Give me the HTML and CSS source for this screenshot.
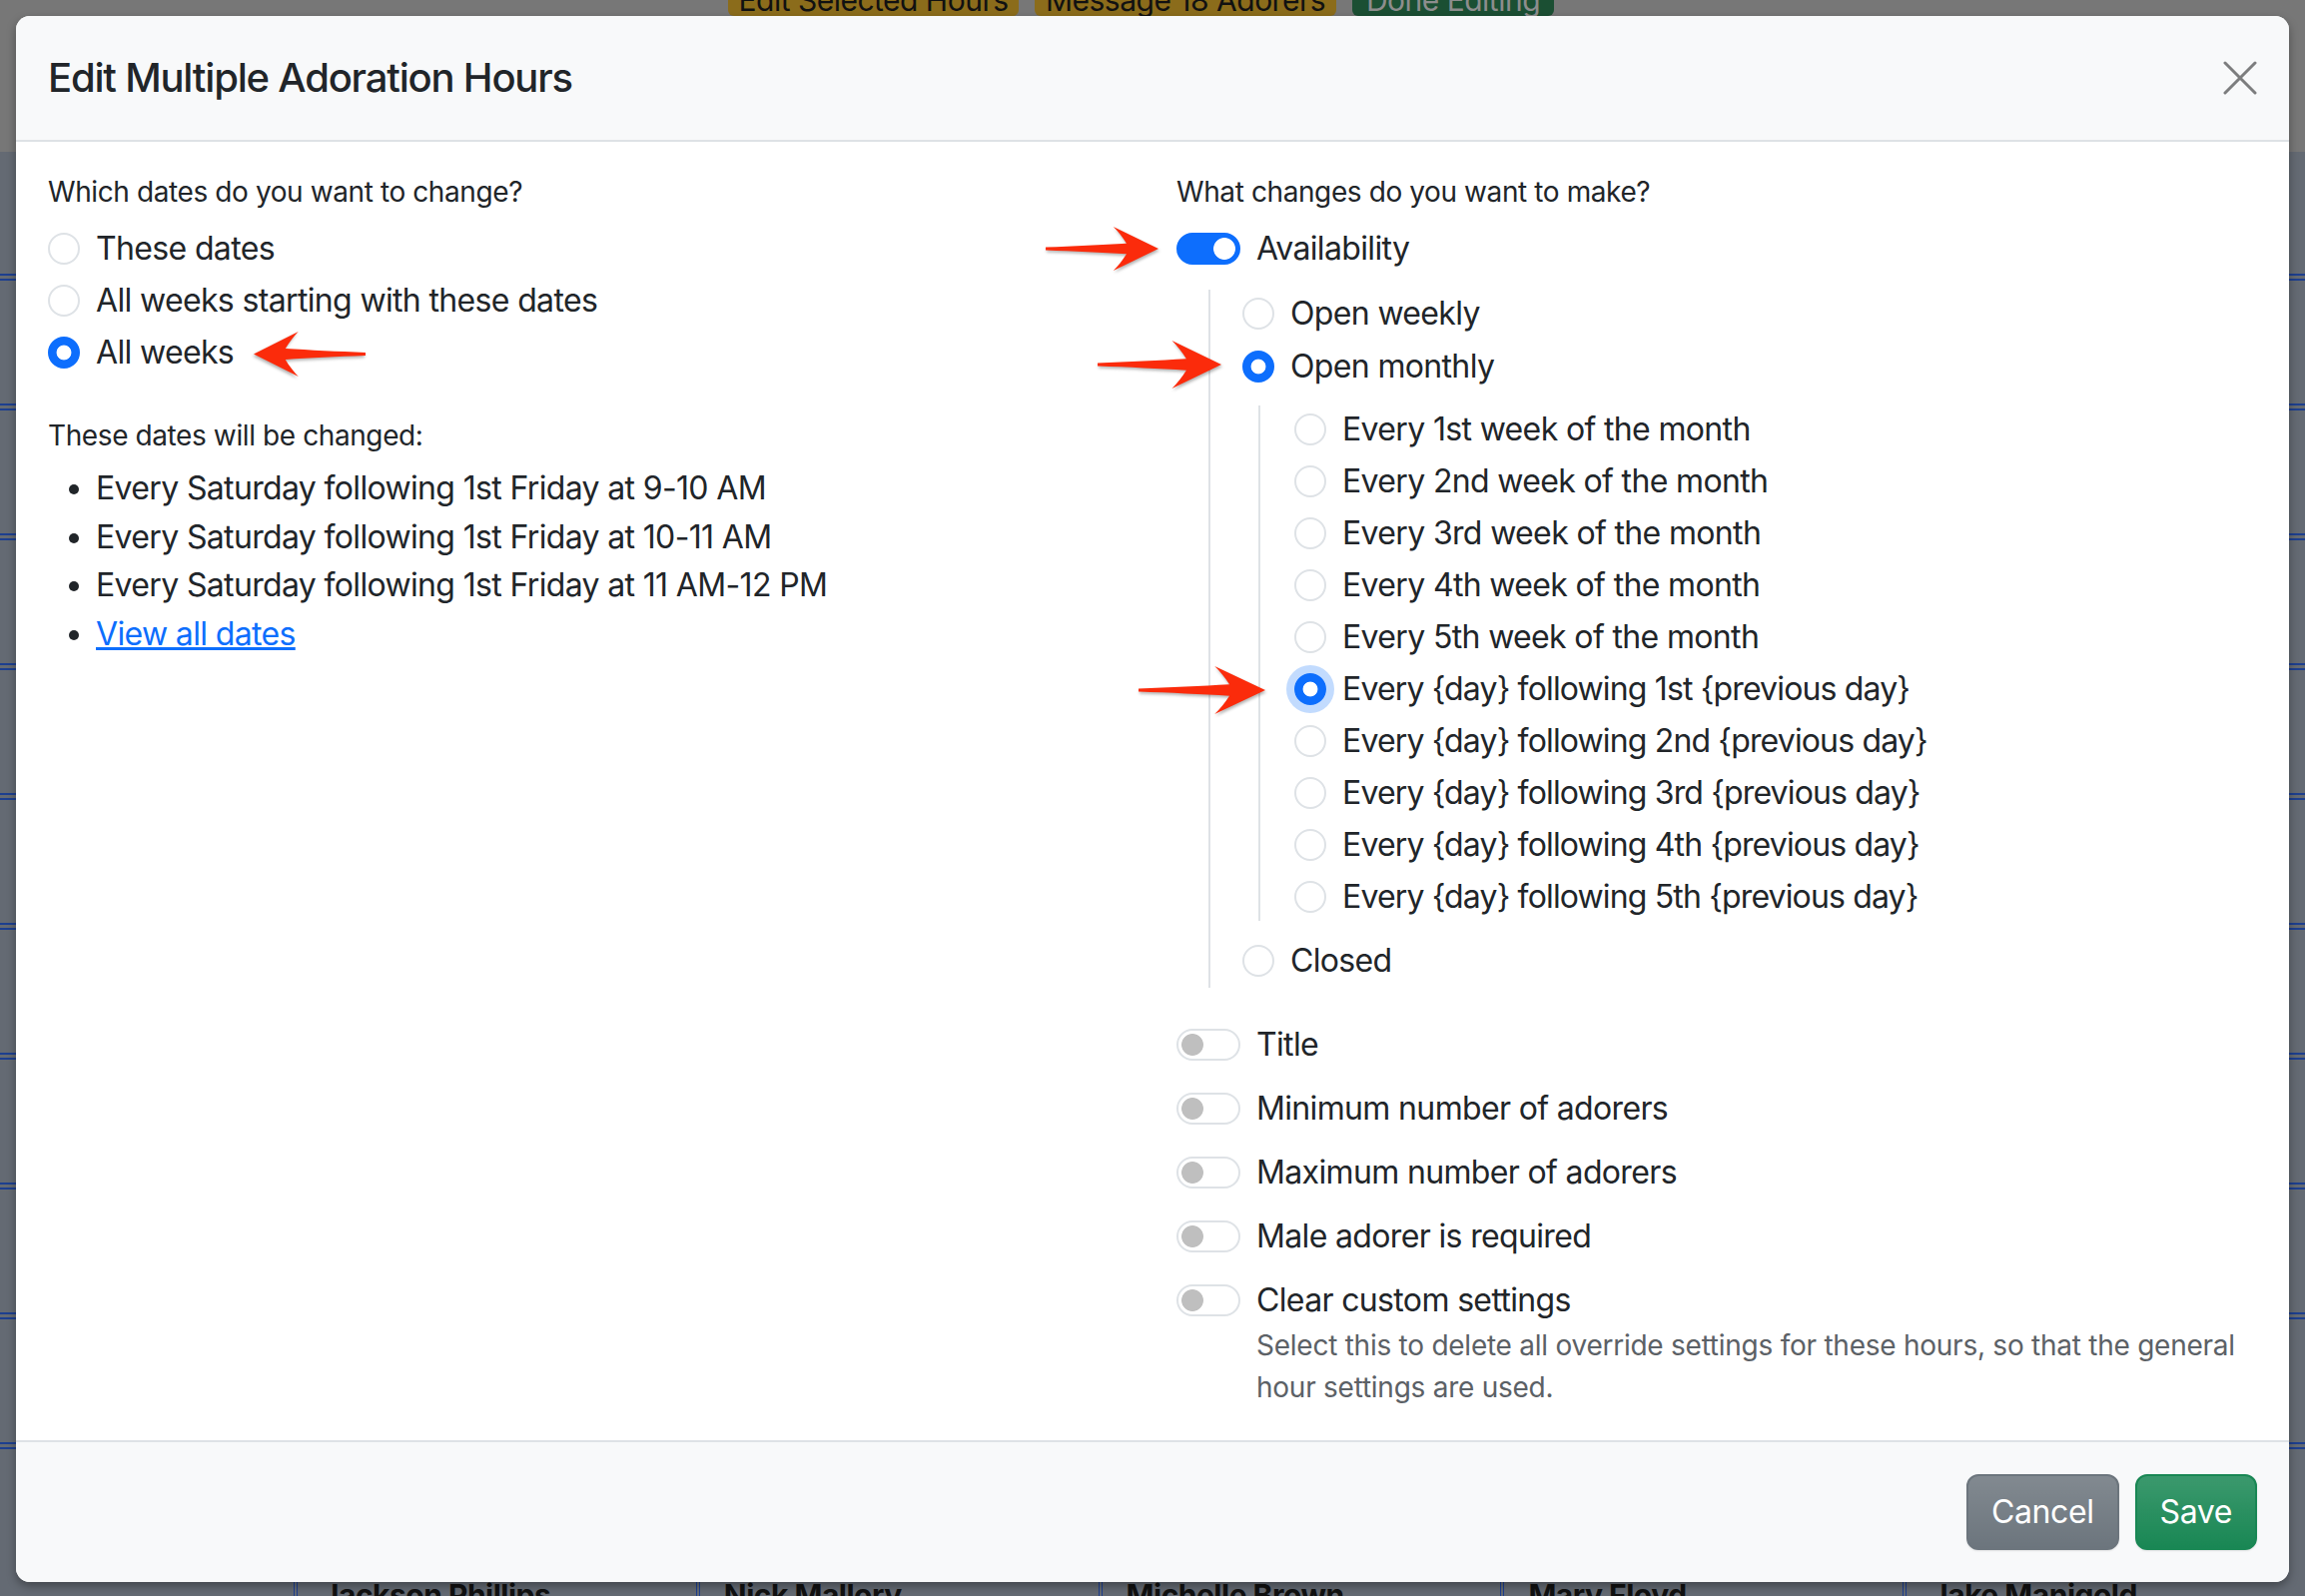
FILE: index.html
```html
<!DOCTYPE html>
<html lang="en">
<head>
<meta charset="utf-8">
<title>Edit Multiple Adoration Hours</title>
<link rel="stylesheet" href="styles.css">
</head>
<body>
<div class="page">
  <div class="page-top">
    <span class="pbtn pbtn-warn pbtn-1">Edit Selected Hours</span>
    <span class="pbtn pbtn-warn pbtn-2">Message 18 Adorers</span>
    <span class="pbtn pbtn-ok pbtn-3">Done Editing</span>
  </div>
  <div class="page-rows"></div>
  <div class="page-names">
    <span class="pname">Jackson Phillips</span>
    <span class="pname">Nick Mallory</span>
    <span class="pname">Michelle Brown</span>
    <span class="pname">Mary Floyd</span>
    <span class="pname">Jake Manigold</span>
  </div>
</div>

<div class="modal">
  <div class="modal-header">
    <h5 class="modal-title">Edit Multiple Adoration Hours</h5>
    <button class="btn-close" aria-label="Close">
      <svg viewBox="0 0 34 34" width="34" height="34"><path d="M2 2 L32 32 M32 2 L2 32" stroke="#7c7d7e" stroke-width="3" stroke-linecap="round" fill="none"/></svg>
    </button>
  </div>

  <div class="modal-body">
    <div class="col">
      <div class="q">Which dates do you want to change?</div>
      <div class="opts">
        <label class="check"><input type="radio" name="dates"><span>These dates</span></label>
        <label class="check"><input type="radio" name="dates"><span>All weeks starting with these dates</span></label>
        <label class="check"><input type="radio" name="dates" checked><span>All weeks</span></label>
      </div>
      <div class="q">These dates will be changed:</div>
      <ul class="dates">
        <li>Every Saturday following 1st Friday at 9-10 AM</li>
        <li>Every Saturday following 1st Friday at 10-11 AM</li>
        <li>Every Saturday following 1st Friday at 11 AM-12 PM</li>
        <li><a href="#">View all dates</a></li>
      </ul>
    </div>

    <div class="col">
      <div class="q">What changes do you want to make?</div>
      <label class="check"><input type="checkbox" class="switch" checked><span>Availability</span></label>
      <div class="sub">
        <label class="check"><input type="radio" name="avail"><span>Open weekly</span></label>
        <label class="check"><input type="radio" name="avail" checked><span>Open monthly</span></label>
        <div class="sub sub-inner">
          <label class="check"><input type="radio" name="month"><span>Every 1st week of the month</span></label>
          <label class="check"><input type="radio" name="month"><span>Every 2nd week of the month</span></label>
          <label class="check"><input type="radio" name="month"><span>Every 3rd week of the month</span></label>
          <label class="check"><input type="radio" name="month"><span>Every 4th week of the month</span></label>
          <label class="check"><input type="radio" name="month"><span>Every 5th week of the month</span></label>
          <label class="check brace"><input type="radio" name="month" class="focus" checked><span>Every {day} following 1st {previous day}</span></label>
          <label class="check brace"><input type="radio" name="month"><span>Every {day} following 2nd {previous day}</span></label>
          <label class="check brace"><input type="radio" name="month"><span>Every {day} following 3rd {previous day}</span></label>
          <label class="check brace"><input type="radio" name="month"><span>Every {day} following 4th {previous day}</span></label>
          <label class="check brace"><input type="radio" name="month"><span>Every {day} following 5th {previous day}</span></label>
        </div>
        <label class="check"><input type="radio" name="avail"><span>Closed</span></label>
      </div>

      <div class="toggles">
        <label class="check"><input type="checkbox" class="switch"><span>Title</span></label>
        <label class="check"><input type="checkbox" class="switch"><span>Minimum number of adorers</span></label>
        <label class="check"><input type="checkbox" class="switch"><span>Maximum number of adorers</span></label>
        <label class="check"><input type="checkbox" class="switch"><span>Male adorer is required</span></label>
        <label class="check"><input type="checkbox" class="switch"><span>Clear custom settings</span></label>
        <div class="help">Select this to delete all override settings for these hours, so that the general hour settings are used.</div>
      </div>
    </div>
  </div>

  <div class="modal-footer">
    <button class="btn btn-secondary">Cancel</button>
    <button class="btn btn-success">Save</button>
  </div>

  <svg class="arrow arrow-1 arrow-left" viewBox="0 0 120 46" preserveAspectRatio="none"><path d="M0,21.5 C30,20.5 60,19 86,17.5 C82,11 77,5 72,0 L120,23 L72,46 C77,41 82,35 86,28.5 C60,27 30,25.5 0,24.5 Z"/></svg>
  <svg class="arrow arrow-2" viewBox="0 0 120 46" preserveAspectRatio="none"><path d="M0,21.5 C30,20.5 60,19 86,17.5 C82,11 77,5 72,0 L120,23 L72,46 C77,41 82,35 86,28.5 C60,27 30,25.5 0,24.5 Z"/></svg>
  <svg class="arrow arrow-3" viewBox="0 0 120 46" preserveAspectRatio="none"><path d="M0,21.5 C30,20.5 60,19 86,17.5 C82,11 77,5 72,0 L120,23 L72,46 C77,41 82,35 86,28.5 C60,27 30,25.5 0,24.5 Z"/></svg>
  <svg class="arrow arrow-4" viewBox="0 0 120 46" preserveAspectRatio="none"><path d="M0,21.5 C30,20.5 60,19 86,17.5 C82,11 77,5 72,0 L120,23 L72,46 C77,41 82,35 86,28.5 C60,27 30,25.5 0,24.5 Z"/></svg>
</div>
</body>
</html>
```

FILE: styles.css
```css
* { box-sizing: border-box; }

body {
  margin: 0;
  width: 2308px;
  height: 1598px;
  overflow: hidden;
  position: relative;
  font-family: Inter, "Noto Sans", "Liberation Sans", sans-serif;
  color: #212529;
  background: #646a73;
}

/* dimmed page behind the modal */
.page {
  height: 1598px;
  display: flex;
  flex-direction: column;
}
.page-top {
  height: 152px;
  flex: none;
  background: #777777;
  display: flex;
  gap: 16px;
  padding-left: 729px;
}
.pbtn {
  height: 34px;
  margin-top: -18px;
  font-size: 30px;
  line-height: 36px;
  letter-spacing: -0.5px;
  text-align: center;
  border-radius: 6px;
  color: #111;
}
.pbtn-warn { background: #8b6c1b; }
.pbtn-ok { background: #1b4f33; color: #8d8d8d; }
.pbtn-1 { width: 291px; }
.pbtn-2 { width: 302px; }
.pbtn-3 { width: 202px; }

.page-rows {
  flex: 1;
  background:
    repeating-linear-gradient(to bottom,
      transparent 0 122px,
      #1d3f8f 122px 124px,
      transparent 124px 127px,
      #1d3f8f 127px 129px,
      transparent 129px 130px),
    #646a73;
}
.page-names {
  height: 24px;
  flex: none;
  display: flex;
  padding-left: 294px;
  background: #646a73;
}
.pname {
  width: 423px;
  border-left: 4px double #1d3f8f;
  padding-left: 24px;
  padding-top: 6px;
  font-size: 30px;
  font-weight: 700;
  line-height: 34px;
  letter-spacing: -0.5px;
  color: #111;
}

/* modal */
.modal {
  position: absolute;
  left: 16px;
  top: 16px;
  width: 2276px;
  background: #fff;
  border-radius: 14px;
  box-shadow: 0 4px 10px rgba(0, 0, 0, 0.35);
}
.modal-header {
  display: flex;
  align-items: center;
  justify-content: space-between;
  padding: 32px;
  background: #f8f9fa;
  border-bottom: 2px solid #dee2e6;
  border-radius: 14px 14px 0 0;
}
.modal-title {
  margin: 0;
  font-size: 40px;
  font-weight: 500;
  line-height: 60px;
  letter-spacing: -1.2px;
}
.btn-close {
  width: 34px;
  height: 34px;
  padding: 0;
  border: 0;
  background: none;
  display: block;
}
.btn-close svg { display: block; }

.modal-body {
  display: grid;
  grid-template-columns: 1082px 1082px;
  column-gap: 48px;
  padding: 29px 32px 32px;
}

.q {
  font-size: 28px;
  line-height: 42px;
  letter-spacing: -0.4px;
  margin-bottom: 12px;
}

.check {
  display: flex;
  align-items: center;
  gap: 16px;
  min-height: 48px;
  margin-bottom: 4px;
  font-size: 32px;
  line-height: 48px;
  letter-spacing: -0.65px;
}
.check.brace { letter-spacing: -0.85px; }
.check input {
  appearance: none;
  -webkit-appearance: none;
  margin: 0;
  width: 32px;
  height: 32px;
  flex: none;
  border: 2px solid #dee2e6;
  border-radius: 50%;
  background: #fff;
}
.check input[type="radio"]:checked {
  border-color: #0d6efd;
  background: radial-gradient(circle, #fff 0 7px, #0d6efd 7.8px);
}
.check input.focus {
  box-shadow: 0 0 0 8px rgba(13, 110, 253, 0.25);
}
.check input.switch {
  width: 64px;
  border-radius: 16px;
  background: radial-gradient(circle at 14px 50%, #bfbfbf 0 10.5px, transparent 11.3px) #fff;
}
.check input.switch:checked {
  border-color: #0d6efd;
  background: radial-gradient(circle at calc(100% - 14px) 50%, #fff 0 10.5px, transparent 11.3px) #0d6efd;
}

.opts { margin-bottom: 38px; }

.dates {
  margin: -4px 0 0;
  padding-left: 48px;
  font-size: 32px;
  line-height: 48.5px;
  letter-spacing: -0.65px;
}
.dates a { color: #0d6efd; text-decoration: underline; }

.sub {
  margin: 17px 0 0 32px;
  border-left: 2px solid #dee2e6;
  padding: 0 0 3px 32px;
}
.sub > .check { margin-bottom: 5px; }
.sub > .check:last-child { margin-bottom: 0; }
.sub-inner {
  margin: 15px 0 16px 16px;
  padding: 0 0 0 34px;
}
.sub-inner > .check { margin-bottom: 4px; }

.toggles { margin-top: 33px; }
.toggles .check { margin-bottom: 16px; }
.toggles .check:nth-last-child(2) { margin-bottom: 0; }
.help {
  padding-left: 80px;
  font-size: 28px;
  line-height: 42px;
  letter-spacing: -0.25px;
  color: #5c6166;
}

.modal-footer {
  display: flex;
  justify-content: flex-end;
  gap: 16px;
  padding: 32px;
  background: #f8f9fa;
  border-top: 2px solid #dee2e6;
  border-radius: 0 0 14px 14px;
}
.btn {
  font-family: inherit;
  font-size: 32px;
  line-height: 48px;
  letter-spacing: -0.4px;
  padding: 12px 23px;
  border: 2px solid;
  border-radius: 12px;
  color: #fff;
  box-shadow: 0 1px 2px rgba(0, 0, 0, 0.1);
}
.btn-secondary {
  background: linear-gradient(180deg, rgba(255,255,255,0.15), rgba(255,255,255,0)) #6c757d;
  border-color: #6c757d;
}
.btn-success {
  background: linear-gradient(180deg, rgba(255,255,255,0.15), rgba(255,255,255,0)) #198754;
  border-color: #198754;
}

/* annotation arrows */
.arrow {
  position: absolute;
  fill: #fb2b0b;
  filter: drop-shadow(1px 2px 1.5px rgba(0, 0, 0, 0.3));
}
.arrow-left { transform: scaleX(-1); }
.arrow-1 { left: 238px; top: 316px; width: 112px; height: 45px; }
.arrow-2 { left: 1031px; top: 211px; width: 113px; height: 44px; }
.arrow-3 { left: 1083px; top: 325px; width: 124px; height: 48px; }
.arrow-4 { left: 1124px; top: 651px; width: 127px; height: 48px; }
```
